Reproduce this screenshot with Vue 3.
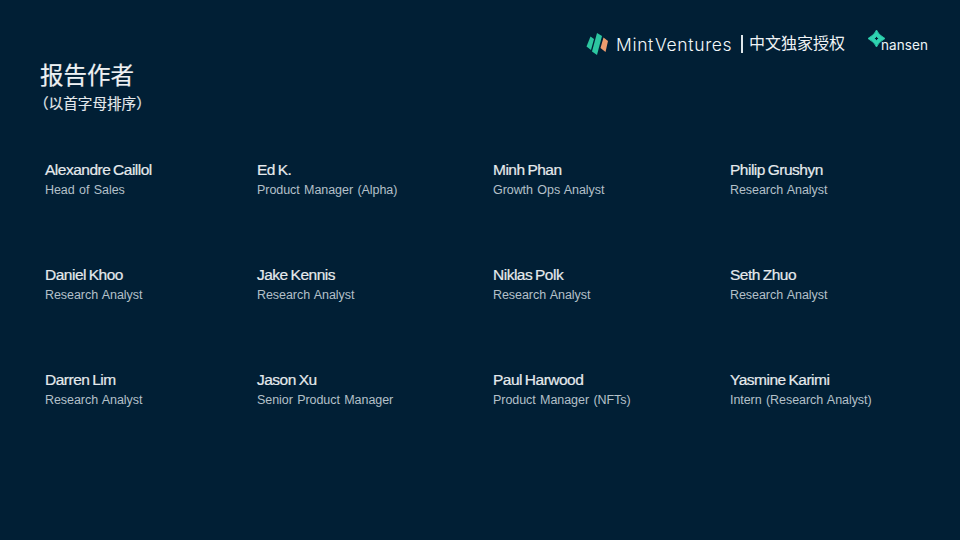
<script setup>
const people = [
  ['Alexandre Caillol', 'Head of Sales'],
  ['Ed K.', 'Product Manager (Alpha)'],
  ['Minh Phan', 'Growth Ops Analyst'],
  ['Philip Grushyn', 'Research Analyst'],
  ['Daniel Khoo', 'Research Analyst'],
  ['Jake Kennis', 'Research Analyst'],
  ['Niklas Polk', 'Research Analyst'],
  ['Seth Zhuo', 'Research Analyst'],
  ['Darren Lim', 'Research Analyst'],
  ['Jason Xu', 'Senior Product Manager'],
  ['Paul Harwood', 'Product Manager (NFTs)'],
  ['Yasmine Karimi', 'Intern (Research Analyst)'],
]
</script>

<template>
  <div class="page">
    <header class="top">
      <svg class="mint-mark" viewBox="0 0 24 24" width="24" height="24" aria-hidden="true">
        <path d="M5.5 4.5 9 7 6 18 1.5 14.5Z" fill="#2cc6a0" />
        <path d="M12 1 17 4 12 23 7 19.5Z" fill="#2cc6a0" />
        <path d="M18.5 5.5 23 9 20.5 20 15.5 16Z" fill="#ee9c6e" />
      </svg>
      <span class="mint-name">Mint Ventures</span>
      <span class="excl">中文独家授权</span>
      <span class="nansen">
        <svg class="nansen-mark" viewBox="0 0 17 17" width="17" height="17" aria-hidden="true">
          <path fill-rule="evenodd" d="M8.5 0Q10 4.5 17 8.5 10 12.5 8.5 17 7 12.5 0 8.5 7 4.5 8.5 0ZM8.5 6.5 6.5 8.5 8.5 10.5 10.5 8.5Z" fill="#2ed3b0" stroke="#2ed3b0" stroke-width="0.8" stroke-linejoin="round" />
        </svg>
        <span class="nansen-name">nansen</span>
      </span>
    </header>

    <section class="heading">
      <h1>报告作者</h1>
      <p>（以首字母排序）</p>
    </section>

    <section class="grid">
      <div v-for="p in people" :key="p[0]" class="person">
        <div class="name">{{ p[0] }}</div>
        <div class="role">{{ p[1] }}</div>
      </div>
    </section>
  </div>
</template>

<style>
body { margin: 0; background: #011f35; }
</style>

<style scoped>
.page {
  width: 960px;
  height: 540px;
  overflow: hidden;
  box-sizing: border-box;
  background: #011f35;
  color: #e8edf0;
  font-family: "Liberation Sans", "Noto Sans CJK SC", sans-serif;
  position: relative;
}
.top {
  display: flex;
  align-items: center;
  height: 32px;
  padding: 28px 33px 0 585px;
}
.mint-mark { flex: none; }
.mint-name {
  margin-left: 7px;
  font-family: Inter, sans-serif;
  font-weight: 300;
  font-size: 17.5px;
  letter-spacing: 0.65px;
  word-spacing: -4.5px;
  color: #f2f8fa;
  width: 113px;
  white-space: nowrap;
}
.excl {
  margin-left: 12px;
  border-left: 2px solid #dfe6ea;
  padding-left: 6px;
  font-size: 16px;
  line-height: 18px;
  color: #f0f3f5;
  white-space: nowrap;
}
.nansen {
  margin-left: auto;
  position: relative;
  width: 60px;
  height: 30px;
}
.nansen-mark { position: absolute; left: 1px; top: 1px; }
.nansen-name {
  position: absolute;
  left: 14px;
  top: 8px;
  font-family: Inter, sans-serif;
  font-weight: 400;
  font-size: 13.5px;
  letter-spacing: 0.1px;
  color: #eef5f7;
}
.heading { padding: 0 0 0 40px; }
.heading h1 {
  margin: 0;
  padding-top: 2px;
  font-size: 23.5px;
  line-height: 28px;
  font-weight: 400;
  color: #eef1f3;
  -webkit-text-stroke: 0.2px #eef1f3;
}
.heading p {
  margin: 5px 0 0 -6px;
  font-size: 14.6px;
  line-height: 18px;
  color: #e4e9ec;
  -webkit-text-stroke: 0.15px #e4e9ec;
}
.grid {
  display: grid;
  grid-template-columns: 212px 236px 237px 185px;
  grid-auto-rows: 105px;
  padding: 47px 0 0 45px;
}
.name {
  font-size: 15.5px;
  line-height: 20px;
  letter-spacing: -0.5px;
  word-spacing: -1px;
  color: #e6eaed;
  -webkit-text-stroke: 0.2px #e6eaed;
  white-space: nowrap;
}
.role {
  margin-top: 2px;
  font-size: 12.5px;
  line-height: 16px;
  letter-spacing: -0.06px;
  word-spacing: 1px;
  color: #b4c0c9;
  white-space: nowrap;
}
</style>
